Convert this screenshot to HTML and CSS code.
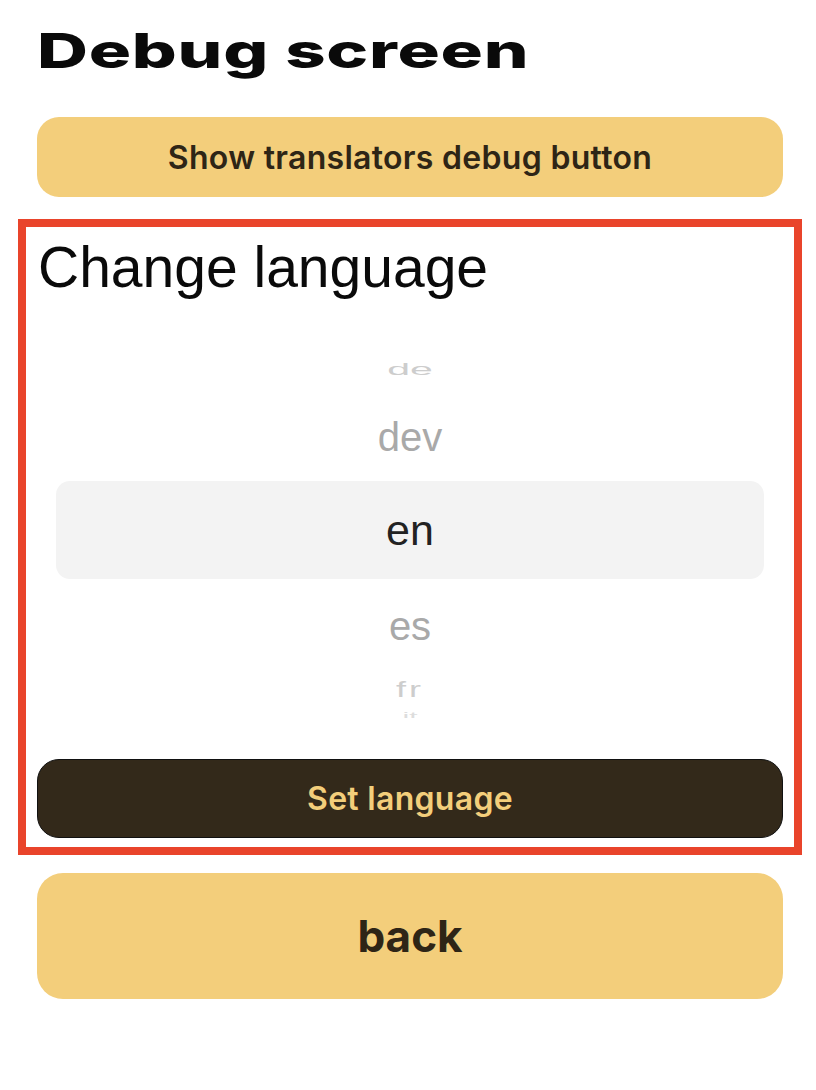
FILE: index.html
```html
<!DOCTYPE html>
<html lang="en">
<head>
<meta charset="utf-8">
<title>Debug screen</title>
<link rel="stylesheet" href="styles.css">
</head>
<body>
<main class="page">
  <h1 class="title"><span class="title-text">Debug screen</span></h1>
  <button class="btn btn-yellow btn-debug">Show translators debug button</button>
  <section class="lang-box">
    <h2 class="lang-title">Change language</h2>
    <div class="picker">
      <div class="row row-far-top"><span class="item item-far">de</span></div>
      <div class="row row-near-top"><span class="item item-near">dev</span></div>
      <div class="row row-selected"><span class="item item-selected">en</span></div>
      <div class="row row-near-bottom"><span class="item item-near">es</span></div>
      <div class="row row-far-bottom"><span class="item item-far item-fr">fr</span></div>
      <div class="row row-cut"><span class="item item-far item-cut">it</span></div>
    </div>
    <button class="btn btn-dark">Set language</button>
  </section>
  <button class="btn btn-yellow btn-back">back</button>
</main>
</body>
</html>
```

FILE: styles.css
```css
* {
  box-sizing: border-box;
}

html, body {
  margin: 0;
  padding: 0;
  background: #ffffff;
}

body {
  font-family: "Liberation Sans", Arial, sans-serif;
  color: #000;
}

.page {
  width: 816px;
  padding: 0 14px 0 18px;
  display: flex;
  flex-direction: column;
}

.title {
  margin: 0 0 0 19px;
  height: 117px;
  padding-top: 22px;
  font-family: Inter, "DejaVu Sans", sans-serif;
  font-weight: 800;
  font-size: 48px;
  line-height: 57px;
  color: #0a0a0a;
}

.title-text {
  display: inline-block;
  transform: scaleX(1.47);
  transform-origin: left center;
  letter-spacing: 0.5px;
}

.btn {
  display: flex;
  align-items: center;
  justify-content: center;
  border: none;
  padding: 0;
  font-family: Inter, "Liberation Sans", sans-serif;
  font-weight: 700;
  cursor: pointer;
}

.btn-yellow {
  background: #f3ce7b;
  color: #2e2516;
}

.btn-debug {
  margin-left: 19px;
  width: 746px;
  height: 80px;
  border-radius: 22px;
  font-size: 32px;
  font-weight: 600;
  letter-spacing: 0.3px;
}

.lang-box {
  margin-top: 22px;
  width: 784px;
  border: 8px solid #e9442b;
  padding: 0 11px 9px 11px;
  display: flex;
  flex-direction: column;
}

.lang-title {
  margin: 0;
  padding-top: 8px;
  height: 118px;
  font-weight: 400;
  font-size: 57px;
  line-height: 64px;
  color: #0a0a0a;
  padding-left: 1px;
}

.picker {
  height: 373px;
  overflow: hidden;
  display: flex;
  flex-direction: column;
  align-items: stretch;
  padding: 0 19px 0 19px;
}

.row {
  display: flex;
  align-items: center;
  justify-content: center;
  flex: none;
}

.row-far-top { height: 48px; }
.row-near-top { height: 88px; }
.row-selected {
  height: 98px;
  background: #f3f3f3;
  border-radius: 14px;
}
.row-near-bottom { height: 94px; }
.row-far-bottom { height: 34px; }
.row-cut {
  height: 40px;
  align-items: flex-start;
}

.item {
  display: inline-block;
  line-height: 1;
}

.item-far {
  font-size: 41px;
  color: #cdcdcd;
  transform: scaleY(0.42);
}

.item-fr {
  font-size: 36px;
  transform: scaleY(0.6);
  letter-spacing: 3px;
}

.item-cut {
  margin-top: -6px;
  font-size: 30px;
  transform: scaleY(0.35);
  color: #dddddd;
}

.item-near {
  font-size: 40px;
  color: #a9a9a9;
}

.item-selected {
  font-size: 43px;
  color: #222222;
}

.btn-dark {
  margin-top: 41px;
  width: 746px;
  height: 79px;
  border-radius: 22px;
  background: #33291a;
  border: 1px solid #111111;
  color: #f3ce7b;
  font-size: 32px;
  font-weight: 600;
  letter-spacing: 0.3px;
}

.btn-back {
  margin-top: 18px;
  margin-left: 19px;
  width: 746px;
  height: 126px;
  border-radius: 26px;
  font-size: 44px;
}
```
